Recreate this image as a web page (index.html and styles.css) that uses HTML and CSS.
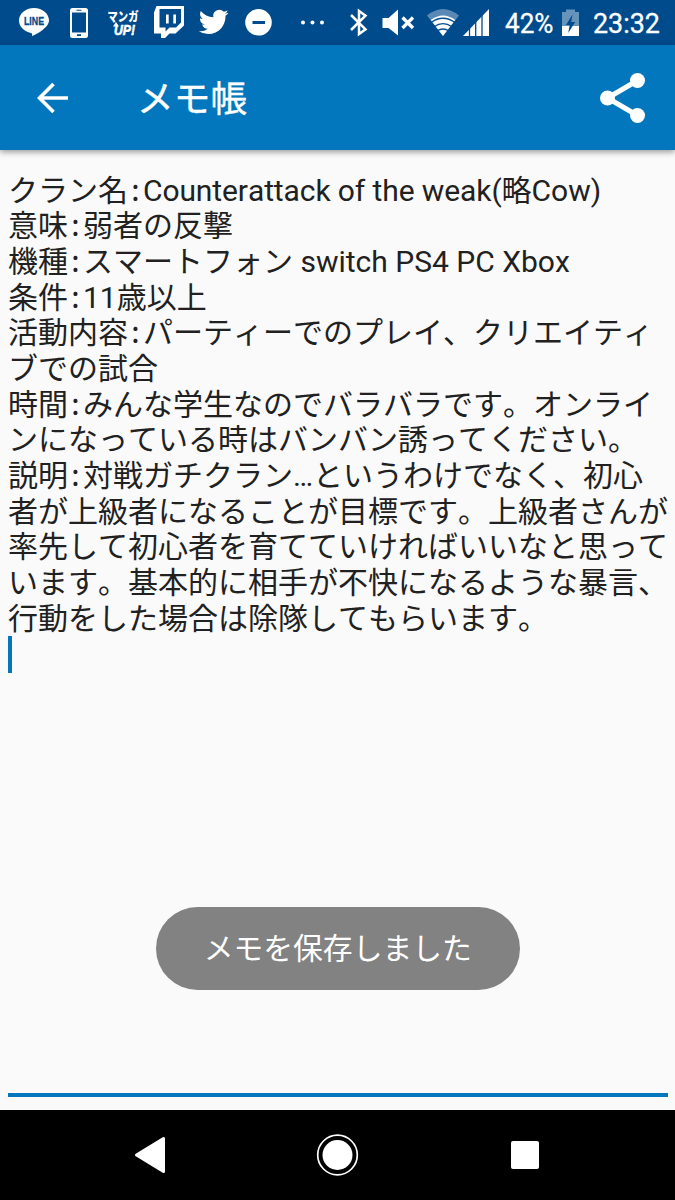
FILE: index.html
```html
<!DOCTYPE html>
<html lang="ja">
<head>
<meta charset="utf-8">
<title>メモ帳</title>
<link rel="stylesheet" href="styles.css">
</head>
<body>
<div class="screen">
  <header class="status">
    <svg class="status-icons" width="675" height="45" viewBox="0 0 675 45" fill="#fff">
      <path d="M34 8c-8.500 0-15 5.600-15 12.600 0 6.200 5.200 11.200 12 12.300 1.500.300 1.200 1.500 1 3.400 4-1.600 17-8.700 17-15.700C49 13.600 42.500 8 34 8z"/>
      <text class="line-label" x="34" y="24.500" text-anchor="middle" textLength="20" lengthAdjust="spacingAndGlyphs">LINE</text>
      <path fill-rule="evenodd" d="M72.500 8h13a2.500 2.500 0 0 1 2.500 2.500v25a2.500 2.500 0 0 1-2.500 2.500h-13a2.500 2.500 0 0 1-2.500-2.500v-25A2.500 2.500 0 0 1 72.500 8zM72 12.500v20h14v-20zM76.500 9.700v1h5v-1zM77 34.300v1.800h4v-1.800z"/>
      <text class="manga" x="107.500" y="20.500" textLength="31" lengthAdjust="spacingAndGlyphs">マンガ</text>
      <text class="manga-up" x="114" y="35" textLength="21" lengthAdjust="spacingAndGlyphs">UP!</text>
      <path d="M113 26.500l3-4.500 3 4.500z"/>
      <path fill-rule="evenodd" d="M156.500 6H184v19.500l-8.500 8h-6l-4.500 4.500h-4v-4.500h-7V12.500zM159.500 9v18.500h6v4l4-4h6.500l5-5V9zM166 14.500h2.700v9H166zM173.300 14.500h2.700v9h-2.700z"/>
      <path transform="translate(198.800 7) scale(1.240)" d="M23.950 4.570a10 10 0 0 1-2.820.780 4.960 4.960 0 0 0 2.160-2.720c-.950.550-2 .950-3.130 1.180a4.920 4.920 0 0 0-8.380 4.480C7.690 8.090 4.070 6.130 1.640 3.160a4.920 4.920 0 0 0 1.520 6.570 4.900 4.900 0 0 1-2.230-.610v.060a4.920 4.920 0 0 0 3.950 4.830 5 5 0 0 1-2.210.080 4.940 4.940 0 0 0 4.600 3.420A9.870 9.870 0 0 1 0 19.540a14 14 0 0 0 7.550 2.210c9.050 0 14-7.500 14-13.980 0-.210 0-.420-.020-.630a9.940 9.940 0 0 0 2.420-2.570z"/>
      <path fill-rule="evenodd" d="M258.500 9a13.300 13.300 0 1 0 0 26.600 13.300 13.300 0 0 0 0-26.600zM252.500 21h12.500v3h-12.500z"/>
      <circle cx="303" cy="22.500" r="2"/><circle cx="312.500" cy="22.500" r="2"/><circle cx="322" cy="22.500" r="2"/>
      <path fill="none" stroke="#fff" stroke-width="2.500" d="M351 15l14.500 14.300-6.500 4.700V11l6.500 4.700L351 30"/>
      <path d="M382.500 18h6l9.500-8.500v26L388.500 28h-6z"/>
      <path fill="none" stroke="#fff" stroke-width="3.300" d="M402.500 17.500l10.500 10.500M413 17.500l-10.500 10.500"/>
      <path opacity=".350" d="M427 15.500q16-13 32 0L443 36z"/>
      <path d="M430.800 20q12.200-9 24.400 0L443 36z"/>
      <path fill="none" stroke="#004b8c" stroke-width="1.300" d="M431 22.500q12-8.500 24 0M434 26.800q9-6.500 18 0M437 31q6-4 12 0"/>
      <path d="M463 36l26-27v27z"/>
      <path stroke="#004b8c" stroke-width="1.300" d="M469.500 24v13M475.700 20v17M482 14v23"/>
      <text class="status-text" x="505" y="32.500" textLength="48.500" lengthAdjust="spacingAndGlyphs">42%</text>
      <path opacity=".400" d="M562 12h4V9.500h9V12h4v14h-17z"/>
      <path d="M562 26h17v10h-17z"/>
      <path fill="#004b8c" d="M572.500 14.500L566 25h3.700l-1.500 8 7-11h-4z"/>
      <text class="status-text" x="593" y="32.500" textLength="67" lengthAdjust="spacingAndGlyphs">23:32</text>
    </svg>
  </header>
  <nav class="appbar">
    <svg class="back" width="32" height="32" viewBox="0 0 32 32"><path fill="none" stroke="#fff" stroke-width="3.600" d="M31 16H3M16.500 2L2.500 16l14 14"/></svg>
    <h1 class="title">メモ帳</h1>
    <svg class="share" width="46" height="52" viewBox="0 0 46 52"><path fill="none" stroke="#fff" stroke-width="5" d="M37.500 8.500L7.500 26l30 17.500"/><g fill="#fff"><circle cx="37.500" cy="8.500" r="7.500"/><circle cx="7.500" cy="26" r="7.500"/><circle cx="37.500" cy="43.500" r="7.500"/></g></svg>
  </nav>
  <main class="memo">
    <div class="text">
      <p>クラン名<i>:</i><span class="latin">Counterattack of the weak(</span>略Cow)</p>
      <p>意味<i>:</i>弱者の反撃</p>
      <p>機種<i>:</i>スマートフォン switch PS4 PC Xbox</p>
      <p>条件<i>:</i>11歳以上</p>
      <p>活動内容<i>:</i>パーティーでのプレイ、クリエイティ<br>ブでの試合</p>
      <p>時間<i>:</i>みんな学生なのでバラバラです。オンライ<br>ンになっている時はバンバン誘ってください。</p>
      <p>説明<i>:</i>対戦ガチクラン…というわけでなく、初心<br>者が上級者になることが目標です。上級者さんが<br>率先して初心者を育てていければいいなと思って<br>います。基本的に相手が不快になるような暴言、<br>行動をした場合は除隊してもらいます。</p>
      <div class="caret"></div>
    </div>
    <div class="toast">メモを保存しました</div>
  </main>
  <footer class="navbar">
    <svg width="675" height="90" viewBox="0 0 675 90" fill="#fff">
      <path stroke="#fff" stroke-width="3" stroke-linejoin="round" d="M163.500 28.500v33L136.500 45z"/>
      <circle cx="337.500" cy="45" r="19.800" fill="none" stroke="#fff" stroke-width="1.700"/><circle cx="337.500" cy="45" r="15"/>
      <rect x="511" y="31" width="28" height="28" rx="2"/>
    </svg>
  </footer>
</div>
</body>
</html>
```
FILE: styles.css
```css
* { box-sizing: border-box; }
body { margin: 0; font-family: Roboto, "Noto Sans CJK JP", sans-serif; font-kerning: none; text-spacing-trim: space-all; }
.screen { display: flex; flex-direction: column; width: 675px; height: 1200px; overflow: hidden; background: #fafafa; }
.status { height: 45px; background: #004b8c; }
.status svg, .navbar svg { display: block; }
.line-label { font: 900 10.5px "Liberation Sans", sans-serif; fill: #004b8c; stroke: #004b8c; stroke-width: .3px; }
.manga { font: 900 13px "Noto Sans CJK JP", sans-serif; }
.manga-up { font: italic 900 15px "Liberation Sans", sans-serif; stroke: #fff; stroke-width: .6px; }
.status-text { font-size: 27px; font-weight: 400; stroke: #fff; stroke-width: .3px; }
.appbar { display: flex; align-items: center; height: 105px; padding: 0 29px 0 37px; background: #0277bd; color: #fff; box-shadow: 0 2px 6px rgba(0,0,0,.4); z-index: 1; }
.title { flex: 1; margin: 0; padding: 4px 0 0 68px; font-size: 36.7px; line-height: 50px; font-weight: 400; -webkit-text-stroke: .4px #fff; }
.memo { position: relative; flex: 1; padding: 22.5px 7px 13px 8px; }
.text { height: 100%; border-bottom: 4px solid #0277bd; color: #212121; font-size: 30px; line-height: 35.67px; white-space: nowrap; }
.text p { margin: 0; }
.text i { display: inline-block; width: 15px; text-align: center; font-style: normal; font-family: "Noto Sans CJK JP", sans-serif; line-height: 30px; }
.latin { letter-spacing: -.1px; }
.caret { width: 3.5px; height: 37px; background: #0277bd; }
.toast { position: absolute; left: 156px; top: 757px; width: 363.5px; height: 83px; border-radius: 42px; background: #828282; color: #fff; font-size: 29.8px; line-height: 84px; text-align: center; white-space: nowrap; }
.navbar { height: 90px; background: #000; }
```
